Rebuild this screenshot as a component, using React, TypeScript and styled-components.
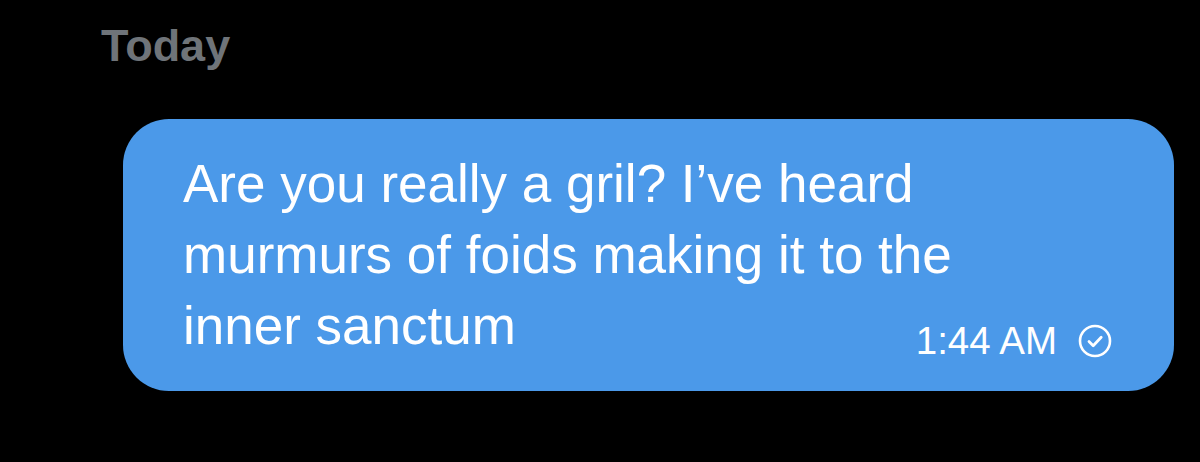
import styled, { createGlobalStyle } from "styled-components";

const GlobalStyle = createGlobalStyle`
  html, body {
    margin: 0;
    padding: 0;
    background: #000;
  }
  body {
    font-family: "Liberation Sans", Arial, sans-serif;
    -webkit-font-smoothing: antialiased;
  }
`;

const Thread = styled.div`
  display: flex;
  flex-direction: column;
  width: 1200px;
  height: 462px;
  box-sizing: border-box;
  padding: 20px 26px 0 101px;
  background: #000;
`;

const DayLabel = styled.div`
  font-size: 45px;
  font-weight: 700;
  line-height: 52px;
  color: #6f7479;
`;

/* text and the sent-time share one grid cell; the time sits at the bottom right,
   beside the last line of text */
const Bubble = styled.div`
  align-self: flex-end;
  display: grid;
  grid-template-areas: "msg";
  width: 1051px;
  margin-top: 47px;
  box-sizing: border-box;
  padding: 29px 62px 30px 60px;
  border-radius: 46px;
  background: #4b99e9;
  color: #fff;
`;

const Body = styled.p`
  grid-area: msg;
  max-width: 800px;
  margin: 0;
  font-size: 53px;
  line-height: 71px;
`;

const Meta = styled.div`
  grid-area: msg;
  justify-self: end;
  align-self: end;
  display: flex;
  align-items: center;
  gap: 21px;
  font-size: 38.5px;
  line-height: 40px;
  white-space: nowrap;
`;

const SentIcon = () => (
  <svg width="34" height="34" viewBox="0 0 34 34" fill="none">
    <circle cx="17" cy="17" r="15" stroke="#fff" strokeWidth="2.6" />
    <path
      d="M11 17.5l4.2 4.2 8-8.4"
      stroke="#fff"
      strokeWidth="2.8"
      strokeLinecap="round"
      strokeLinejoin="round"
    />
  </svg>
);

export default function App() {
  return (
    <>
      <GlobalStyle />
      <Thread>
        <DayLabel>Today</DayLabel>
        <Bubble>
          <Body>
            Are you really a gril? I’ve heard murmurs of foids making it to the inner sanctum
          </Body>
          <Meta>
            1:44 AM
            <SentIcon />
          </Meta>
        </Bubble>
      </Thread>
    </>
  );
}
